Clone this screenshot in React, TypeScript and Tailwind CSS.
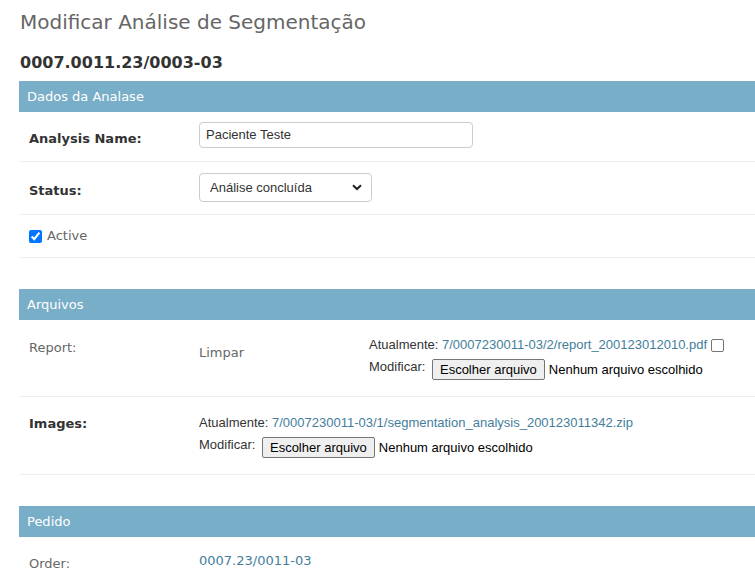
import React from 'react';

function SectionHeader({ title }: { title: string }) {
  return (
    <div className="h-[31px] bg-[#79aec8] px-2 flex items-center text-white text-[13px]">
      {title}
    </div>
  );
}

function FileButton() {
  return (
    <span className="inline-flex items-center h-[21px] px-[7px] border border-[#767676] rounded-[2px] bg-[#efefef] text-black text-[13px] leading-none">
      Escolher arquivo
    </span>
  );
}

function FileWidget({ path }: { path: string }) {
  return (
    <div className="font-['Liberation_Sans',Arial,sans-serif] text-[13px] text-[#333]">
      <div className="flex items-center leading-4">
        <span>Atualmente:&nbsp;</span>
        <a className="text-[#447e9b]">{path}</a>
      </div>
      <div className="flex items-center mt-[6px] leading-4">
        <span className="self-start">Modificar:&nbsp;</span>
        <span className="ml-[3px]">
          <FileButton />
        </span>
        <span className="ml-[4px] text-black">Nenhum arquivo escolhido</span>
      </div>
    </div>
  );
}

export default function App() {
  return (
    <div className="min-h-screen bg-white font-['DejaVu_Sans',sans-serif] text-[13px] text-[#333] overflow-hidden">
      <h1 className="pl-5 pt-[10px] text-[20px] leading-6 text-[#666]">
        Modificar Análise de Segmentação
      </h1>
      <h2 className="pl-5 mt-[19px] text-[16px] font-bold leading-5 text-[#333]">
        0007.0011.23/0003-03
      </h2>

      <div className="pl-[19px] mt-[8px]">
        <SectionHeader title="Dados da Analase" />

        <div className="flex items-start h-[50px] pl-[10px] pt-[10px] border-b border-[#eee]">
          <label className="w-[170px] pt-[9px] font-bold leading-4">Analysis Name:</label>
          <div className="w-[274px] h-[26px] border border-[#ccc] rounded-[4px] px-[6px] flex items-center font-['Liberation_Sans',Arial,sans-serif] text-[13px] text-[#333]">
            Paciente Teste
          </div>
        </div>

        <div className="flex items-start h-[53px] pl-[10px] pt-[11px] border-b border-[#eee]">
          <label className="w-[170px] pt-[10px] font-bold leading-4">Status:</label>
          <div className="w-[173px] h-[29px] border border-[#ccc] rounded-[4px] pl-[10px] pr-[9px] flex items-center justify-between font-['Liberation_Sans',Arial,sans-serif] text-[13px] text-[#333]">
            <span>Análise concluída</span>
            <svg width="10" height="7" viewBox="0 0 10 7">
              <path d="M1 1.2 L5 5 L9 1.2" fill="none" stroke="#222" strokeWidth="2" />
            </svg>
          </div>
        </div>

        <div className="flex items-center h-[43px] pl-[10px] border-b border-[#eee]">
          <input type="checkbox" defaultChecked className="w-[13px] h-[13px] m-0 accent-[#0075ff]" />
          <label className="ml-[5px] text-[#666] leading-4">Active</label>
        </div>

        <div className="mt-[31px]">
          <SectionHeader title="Arquivos" />
        </div>

        <div className="flex items-start h-[77px] pl-[10px] pt-[17px] border-b border-[#eee]">
          <label className="w-[170px] pt-[3px] text-[#666] leading-4">Report:</label>
          <span className="w-[170px] pt-[8px] text-[#666] leading-4">Limpar</span>
          <div className="font-['Liberation_Sans',Arial,sans-serif] text-[13px] text-[#333]">
            <div className="flex items-center leading-4">
              <span>Atualmente:&nbsp;</span>
              <a className="text-[#447e9b]">7/0007230011-03/2/report_200123012010.pdf</a>
              <span className="ml-[4px] w-[13px] h-[13px] border border-[#767676] rounded-[2px] bg-white" />
            </div>
            <div className="flex items-center mt-[6px] leading-4">
              <span className="self-start">Modificar:&nbsp;</span>
              <span className="ml-[3px]">
                <FileButton />
              </span>
              <span className="ml-[4px] text-black">Nenhum arquivo escolhido</span>
            </div>
          </div>
        </div>

        <div className="flex items-start h-[78px] pl-[10px] pt-[18px] border-b border-[#eee]">
          <label className="w-[170px] pt-[1px] font-bold leading-4">Images:</label>
          <FileWidget path="7/0007230011-03/1/segmentation_analysis_200123011342.zip" />
        </div>

        <div className="mt-[31px]">
          <SectionHeader title="Pedido" />
        </div>

        <div className="flex items-start h-[48px] pl-[10px] pt-[16px]">
          <label className="w-[170px] pt-[3px] text-[#666] leading-4">Order:</label>
          <a className="text-[#447e9b] leading-4">0007.23/0011-03</a>
        </div>
      </div>
    </div>
  );
}
